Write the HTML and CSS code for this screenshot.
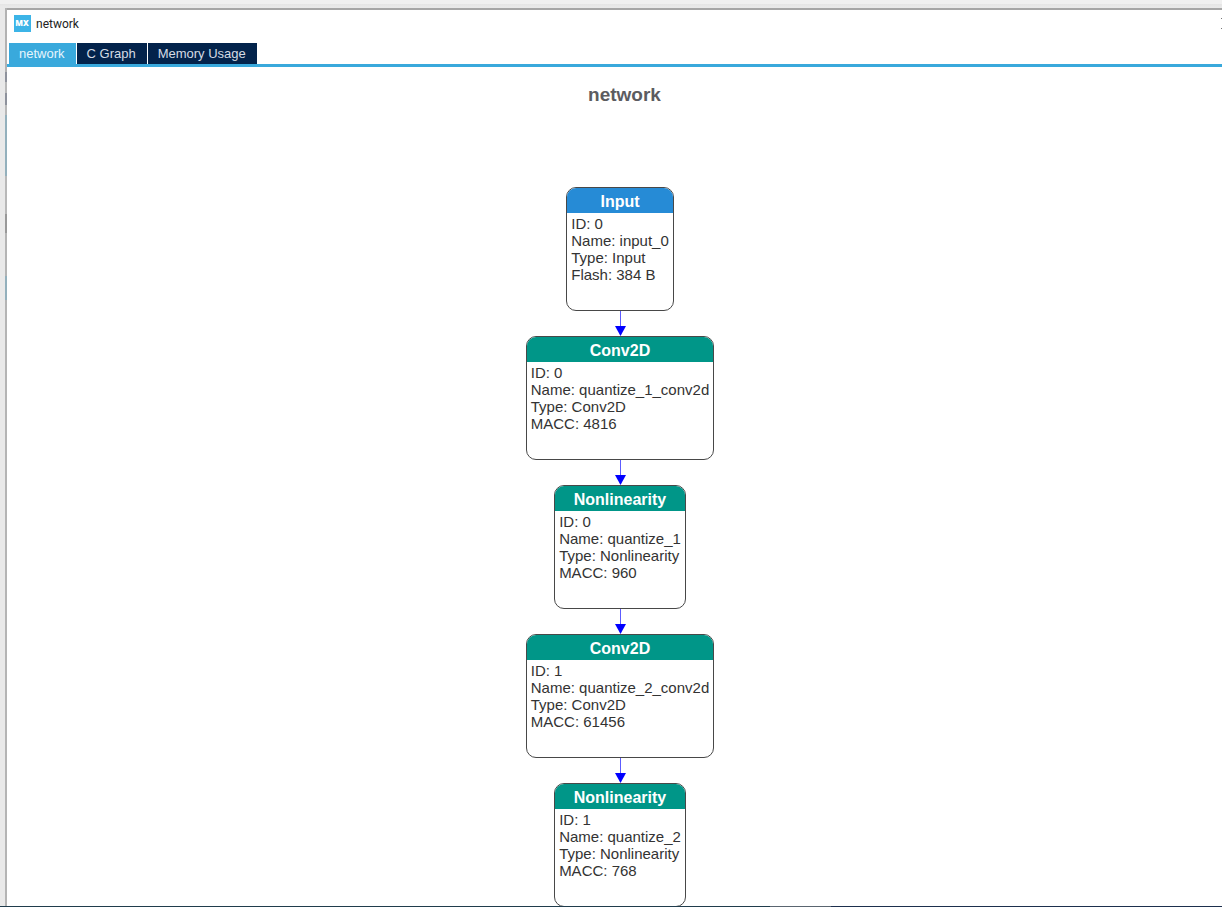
FILE: index.html
```html
<!DOCTYPE html>
<html lang="en">
<head>
    <meta charset="UTF-8">
    <meta name="viewport" content="width=device-width, initial-scale=1.0">
    <title>network</title>
    <link rel="stylesheet" href="styles.css">
</head>
<body>
    <div class="desktop">
        <div class="window-edge"></div>
        <div class="window">
            <header class="title-bar">
                <svg class="app-icon" width="17" height="17" viewBox="0 0 17 17" aria-hidden="true">
                    <rect width="17" height="17" fill="#3cb4e7"/>
                    <text class="app-icon-text" x="8" y="11" text-anchor="middle">MX</text>
                </svg>
                <span class="window-title">network</span>
                <button type="button" class="close-btn" aria-label="Close">
                    <svg width="11" height="11" viewBox="0 0 11 11" aria-hidden="true">
                        <path d="M0 0l11 11M11 0L0 11" stroke="#777" fill="none"/>
                    </svg>
                </button>
            </header>

            <nav class="tabs">
                <button type="button" class="tab active">network</button>
                <button type="button" class="tab">C Graph</button>
                <button type="button" class="tab">Memory Usage</button>
            </nav>

            <main class="canvas">
                <h1 class="graph-title">network</h1>

                <div class="graph">
                    <section class="node input">
                        <h2 class="node-header">Input</h2>
                        <ul class="node-info">
                            <li>ID: 0</li>
                            <li>Name: input_0</li>
                            <li>Type: Input</li>
                            <li>Flash: 384 B</li>
                        </ul>
                    </section>
                    <svg class="arrow" width="11" height="25" viewBox="0 0 11 25" aria-hidden="true">
                        <path d="M5 0h1v15H5z" fill="#5c5cff"/>
                        <path d="M0 15h11L5.500 25z" fill="#0000ff"/>
                    </svg>
                    <section class="node">
                        <h2 class="node-header">Conv2D</h2>
                        <ul class="node-info">
                            <li>ID: 0</li>
                            <li>Name: quantize_1_conv2d</li>
                            <li>Type: Conv2D</li>
                            <li>MACC: 4816</li>
                        </ul>
                    </section>
                    <svg class="arrow" width="11" height="25" viewBox="0 0 11 25" aria-hidden="true">
                        <path d="M5 0h1v15H5z" fill="#5c5cff"/>
                        <path d="M0 15h11L5.500 25z" fill="#0000ff"/>
                    </svg>
                    <section class="node">
                        <h2 class="node-header">Nonlinearity</h2>
                        <ul class="node-info">
                            <li>ID: 0</li>
                            <li>Name: quantize_1</li>
                            <li>Type: Nonlinearity</li>
                            <li>MACC: 960</li>
                        </ul>
                    </section>
                    <svg class="arrow" width="11" height="25" viewBox="0 0 11 25" aria-hidden="true">
                        <path d="M5 0h1v15H5z" fill="#5c5cff"/>
                        <path d="M0 15h11L5.500 25z" fill="#0000ff"/>
                    </svg>
                    <section class="node">
                        <h2 class="node-header">Conv2D</h2>
                        <ul class="node-info">
                            <li>ID: 1</li>
                            <li>Name: quantize_2_conv2d</li>
                            <li>Type: Conv2D</li>
                            <li>MACC: 61456</li>
                        </ul>
                    </section>
                    <svg class="arrow" width="11" height="25" viewBox="0 0 11 25" aria-hidden="true">
                        <path d="M5 0h1v15H5z" fill="#5c5cff"/>
                        <path d="M0 15h11L5.500 25z" fill="#0000ff"/>
                    </svg>
                    <section class="node">
                        <h2 class="node-header">Nonlinearity</h2>
                        <ul class="node-info">
                            <li>ID: 1</li>
                            <li>Name: quantize_2</li>
                            <li>Type: Nonlinearity</li>
                            <li>MACC: 768</li>
                        </ul>
                    </section>
                </div>
            </main>
        </div>
    </div>
    <div class="taskbar"></div>
</body>
</html>
```
FILE: styles.css
```css
* {
    box-sizing: border-box;
}

body {
    margin: 0;
    height: 100vh;
    display: flex;
    flex-direction: column;
    overflow: hidden;
    background-color: #e9e9e9;
    font-family: "Liberation Sans", Arial, sans-serif;
}

.desktop {
    flex: 1;
    min-height: 0;
    display: flex;
    padding: 8px 0 0 5px;
    background: linear-gradient(#f0f0f0 4px, #e5e5e5 4px, #e9e9e9 7px);
}

/* window frame with bits of the desktop showing behind it */
.window-edge {
    width: 2px;
    flex-shrink: 0;
    background: linear-gradient(#b2b2b2 64px, #8e929c 64px 74px, #b8b8b8 74px 85px, #8e929c 85px 97px, #b8b8b8 97px 107px, #93b0bc 107px 168px, #b8b8b8 168px 206px, #999 206px 225px, #b4b4b4 225px 268px, #93b0bc 268px 292px, #b4b4b4 292px);
}

/* runs past the right side of the screen */
.window {
    flex: 1;
    min-width: 0;
    margin-right: -20px;
    display: flex;
    flex-direction: column;
    overflow: hidden;
    border-top: 2px solid #a6a6a6;
    background-color: #fff;
}

.title-bar {
    display: flex;
    align-items: center;
    gap: 5px;
    height: 33px;
    padding: 0 10px 6px 7px;
}

.app-icon-text {
    font-family: "Open Sans", sans-serif;
    font-size: 8px;
    font-weight: 800;
    fill: #fff;
}

.window-title {
    font-family: Roboto, sans-serif;
    font-size: 12px;
    color: #222;
}

.close-btn {
    display: flex;
    margin-left: auto;
    padding: 0;
    border: none;
    background: none;
    cursor: pointer;
}

.tabs {
    display: flex;
    gap: 1px;
    padding-left: 2px;
    border-bottom: 3px solid #39a9dc;
}

.tab {
    height: 21px;
    padding: 0 11px 0 10px;
    border: none;
    background-color: #03234b;
    color: #d5dbe4;
    font-family: inherit;
    font-size: 13px;
    line-height: 21px;
    cursor: pointer;
}

    .tab.active {
        background-color: #39a9dc;
        color: #e6f5fc;
    }

.canvas {
    flex: 1;
    min-height: 0;
    overflow: hidden;
    background-color: #fff;
}

.graph-title {
    margin: 17px 0 81px;
    text-align: center;
    font-size: 19px;
    line-height: 22px;
    color: #5c5c60;
}

.graph {
    display: flex;
    flex-direction: column;
    align-items: center;
    padding-right: 9px;
}

.node {
    flex-shrink: 0;
    height: 124px;
    overflow: hidden;
    border: 1px solid #484848;
    border-radius: 10px;
    background-color: #fff;
}

.node-header {
    margin: 0;
    height: 25px;
    background-color: #009688;
    color: #fff;
    text-align: center;
    font-size: 16px;
    line-height: 28px;
}

.node.input .node-header {
    background-color: #268bd6;
}

.node-info {
    margin: 0;
    padding: 2px 4px 0;
    list-style: none;
    font-size: 15px;
    line-height: 17px;
    color: #333;
}

.arrow {
    display: block;
    flex-shrink: 0;
}

.taskbar {
    height: 1px;
    flex-shrink: 0;
    background: linear-gradient(to right, #203c4c 63%, #5a6570 63% 68%, #1d2f4d 68%);
}
```
